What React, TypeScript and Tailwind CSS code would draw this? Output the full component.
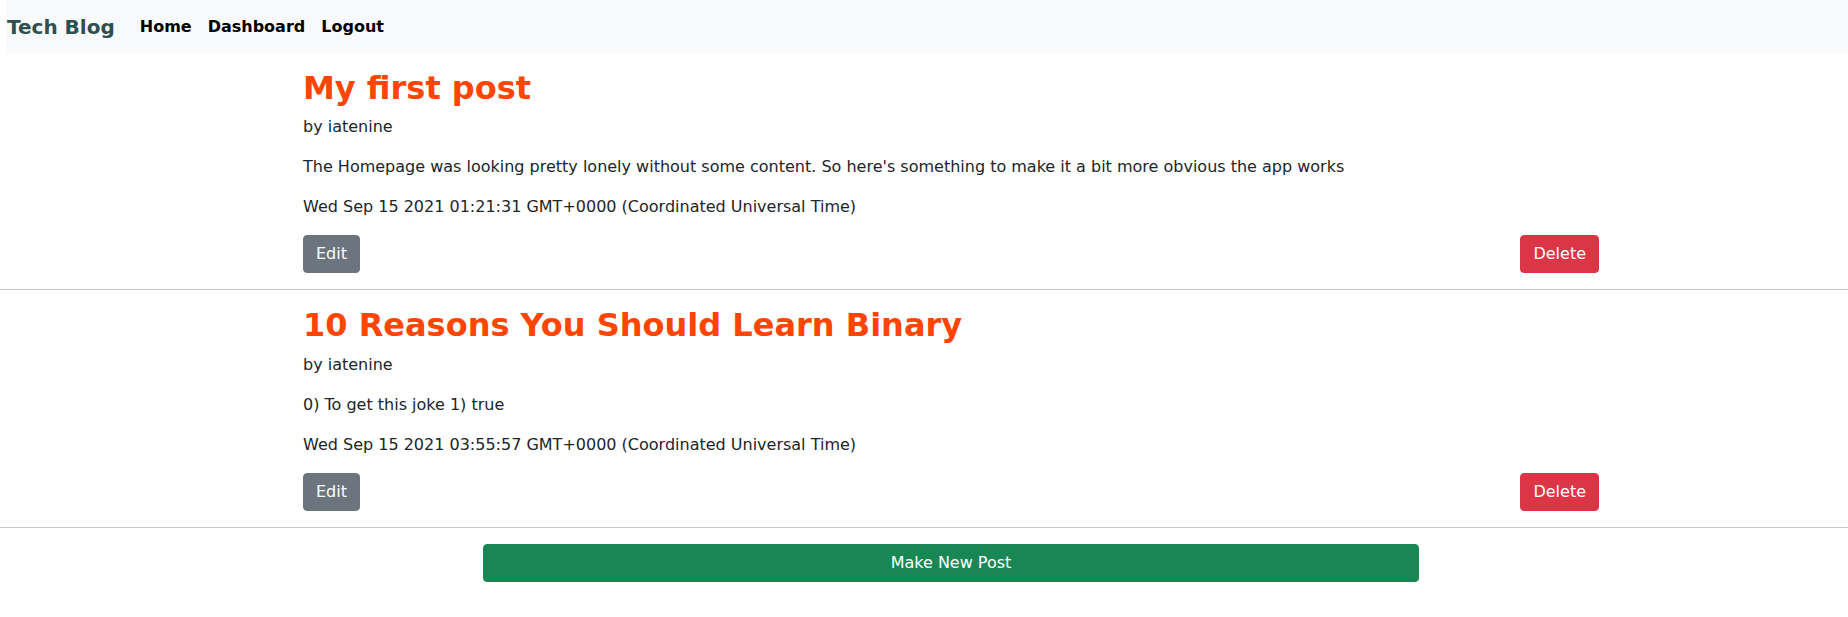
import React from 'react';

type Post = {
  title: string;
  author: string;
  body: string;
  date: string;
};

const posts: Post[] = [
  {
    title: 'My first post',
    author: 'iatenine',
    body: "The Homepage was looking pretty lonely without some content. So here's something to make it a bit more obvious the app works",
    date: 'Wed Sep 15 2021 01:21:31 GMT+0000 (Coordinated Universal Time)',
  },
  {
    title: '10 Reasons You Should Learn Binary',
    author: 'iatenine',
    body: '0) To get this joke 1) true',
    date: 'Wed Sep 15 2021 03:55:57 GMT+0000 (Coordinated Universal Time)',
  },
];

const PostCard: React.FC<{ post: Post }> = ({ post }) => (
  <article className="border-b border-[#c8c8c8] pt-4 pb-4">
    <div className="ml-[303px] w-[1296px]">
      <h2 className="text-[32px] leading-[1.2] font-bold text-[#ff4500] mb-2">{post.title}</h2>
      <p className="mb-4">by {post.author}</p>
      <p className="mb-4">{post.body}</p>
      <p className="mb-4">{post.date}</p>
      <div className="flex justify-between">
        <button className="bg-[#6c757d] text-white px-3 py-1.5 leading-6 rounded-[4px] border border-[#6c757d]">
          Edit
        </button>
        <button className="bg-[#dc3545] text-white px-3 py-1.5 leading-6 rounded-[4px] border border-[#dc3545]">
          Delete
        </button>
      </div>
    </div>
  </article>
);

export default function App() {
  return (
    <div className="min-h-screen bg-white text-[#212529] text-base leading-6 font-['DejaVu_Sans',sans-serif]">
      <nav className="ml-[7px] h-[53px] bg-[#f8f9fa] flex items-center">
        <a className="text-[20px] font-bold text-[#2f4f4f] mr-[17px]">Tech Blog</a>
        <div className="flex font-bold text-black">
          <a className="px-2">Home</a>
          <a className="px-2">Dashboard</a>
          <a className="px-2">Logout</a>
        </div>
      </nav>

      {posts.map((post) => (
        <PostCard key={post.title} post={post} />
      ))}

      <div className="ml-[303px] w-[1296px] mt-4 flex justify-center">
        <button className="w-[936px] bg-[#198754] text-white px-3 py-1.5 leading-6 rounded-[4px] border border-[#198754]">
          Make New Post
        </button>
      </div>
    </div>
  );
}
